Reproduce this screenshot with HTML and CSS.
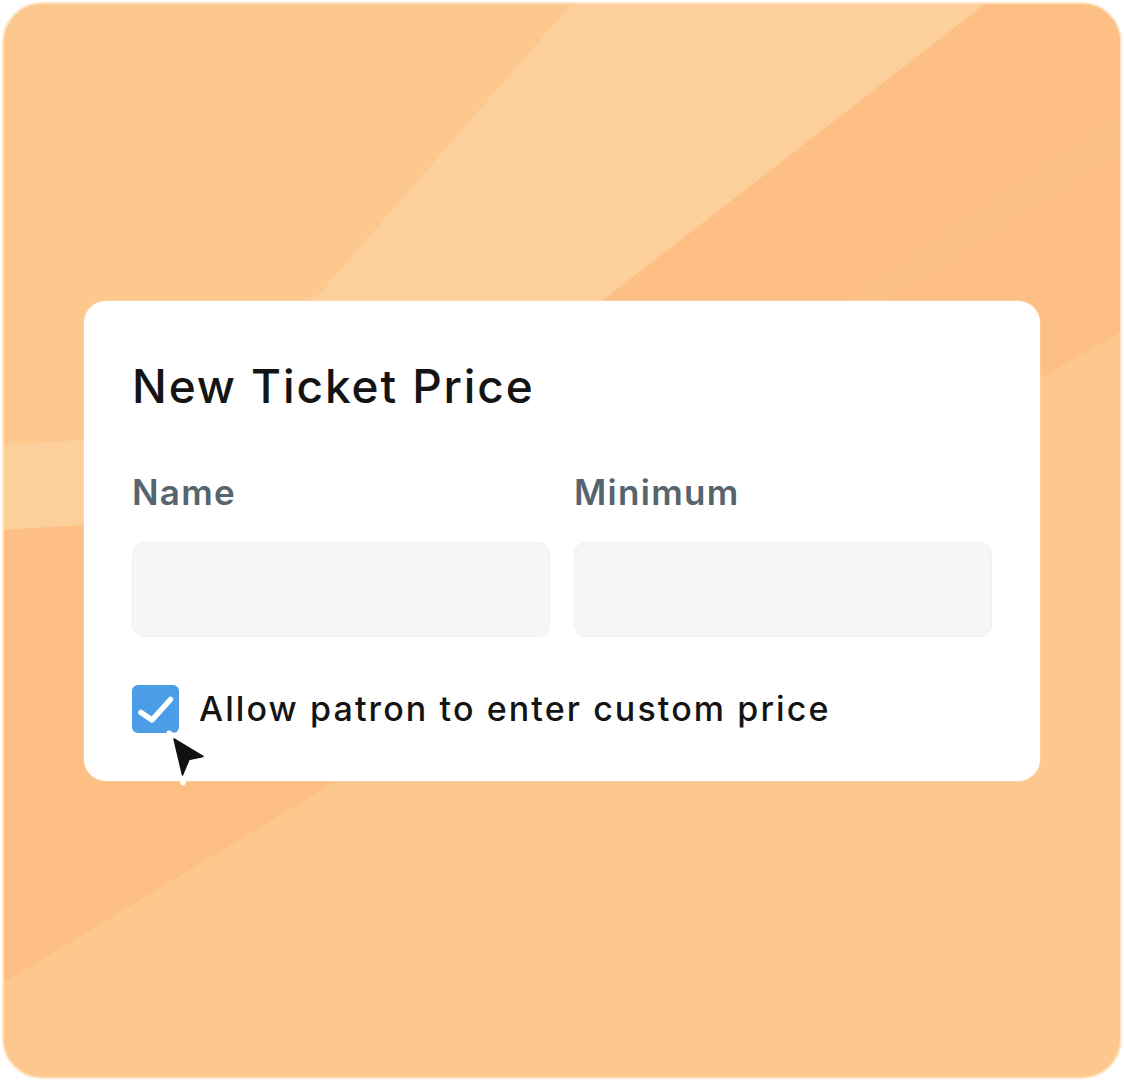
FILE: index.html
```html
<!DOCTYPE html>
<html lang="en">
<head>
<meta charset="utf-8">
<title>New Ticket Price</title>
<link rel="stylesheet" href="styles.css">
</head>
<body>
<div class="frame">
  <svg class="bg" viewBox="4 4 1116 1073" preserveAspectRatio="none" aria-hidden="true">
    <path d="M990,0 L1124,0 L1124,330 L333,783 L0,985 L0,530 L83,525 L603,300 Z" fill="#fdbf83"/>
    <path d="M575,0 L990,0 L603,300 L83,525 L0,530 L0,445 L84,440 L320,293 Z" fill="#fdcf9b"/>
    <path d="M640,0 L660,0 L575,120 L555,115 Z" fill="#fdd09e" opacity="0.35"/>
    <path d="M1124,110 L1124,150 L860,320 L830,310 Z" fill="#fdc690" opacity="0.35"/>
  </svg>
  <div class="card">
    <h1 class="title">New Ticket Price</h1>
    <div class="fields">
      <div class="field">
        <div class="label">Name</div>
        <div class="input"></div>
      </div>
      <div class="field">
        <div class="label">Minimum</div>
        <div class="input"></div>
      </div>
    </div>
    <div class="check-row">
      <span class="checkbox">
        <svg viewBox="0 0 47 48" width="47" height="48"><path d="M9 27.5 L20 35 L38.5 14.5" fill="none" stroke="#fff" stroke-width="5.5" stroke-linecap="round" stroke-linejoin="round"/></svg>
        <svg class="cursor" viewBox="0 0 60 60" width="60" height="60">
          <path d="M6 6 L46 30 L28 35 L20 56 Z" fill="#000" opacity="0.12" transform="translate(1.5 2)"/>
          <path d="M6 6 L46 30 L28 35 L20 56 Z" fill="#fff" stroke="#fff" stroke-width="5" stroke-linejoin="round"/>
          <path d="M11 12 L40 29.5 L26 32.5 L19.5 48 Z" fill="#111" stroke="#111" stroke-width="1.5" stroke-linejoin="round"/>
        </svg>
      </span>
      <span class="check-label">Allow patron to enter custom price</span>
    </div>
  </div>
</div>
</body>
</html>
```

FILE: styles.css
```css
* { box-sizing: border-box; }
html, body { margin: 0; padding: 0; background: #ffffff; }
body { width: 1124px; height: 1081px; overflow: hidden; font-family: Inter, "Noto Sans", sans-serif; }

.frame {
  position: relative;
  margin: 2px;
  width: 1120px;
  height: 1077px;
  border: 2px solid #fee4c3;
  border-radius: 40px;
  background: #fdc88d;
  overflow: hidden;
  padding: 297px 0 0 80px;
}
.bg {
  position: absolute;
  inset: 0;
  width: 100%;
  height: 100%;
  display: block;
}

.card {
  position: relative;
  width: 956px;
  height: 480px;
  background: #ffffff;
  border-radius: 22px;
  padding: 57px 48px 48px 48px;
  box-shadow: 0 0 2px rgba(255,255,255,0.6);
}

.title {
  margin: 0;
  font-size: 46px;
  line-height: 56px;
  font-weight: 550;
  color: #141414;
  letter-spacing: 1.9px;
}

.fields {
  display: flex;
  gap: 24px;
  margin-top: 57px;
}
.field { flex: 1; display: flex; flex-direction: column; }
.label {
  font-size: 35px;
  line-height: 42px;
  font-weight: 600;
  color: #56646e;
  letter-spacing: 1.3px;
}
.input {
  margin-top: 29px;
  height: 95px;
  border-radius: 12px;
  background: #f4f6f8;
  border: 1px solid #eff1f3;
}

.check-row {
  display: flex;
  align-items: center;
  gap: 20px;
  margin-top: 48px;
}
.checkbox {
  position: relative;
  width: 47px;
  height: 48px;
  flex: 0 0 auto;
  border-radius: 6px;
  background: #4a9de6;
}
.checkbox > svg:first-child { display: block; }
.cursor {
  position: absolute;
  left: 31px;
  top: 42px;
}
.check-label {
  font-size: 34px;
  line-height: 42px;
  font-weight: 500;
  color: #141414;
  letter-spacing: 2.1px;
}
```
